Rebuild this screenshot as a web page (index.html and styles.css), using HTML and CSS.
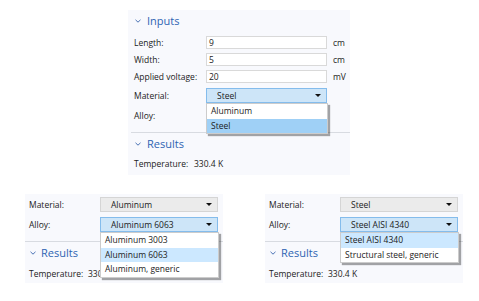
FILE: index.html
```html
<!DOCTYPE html>
<html lang="en">
<head>
    <meta charset="UTF-8">
    <title>Material selection</title>
    <link rel="stylesheet" href="styles.css">
</head>
<body>
    <div class="canvas">
        <!-- Full settings panel with the material list open -->
        <section class="panel panel-main">
            <div class="section-head">
                <svg class="chevron" viewBox="0 0 6 4"><path d="M0.5 0.8 L3 3.2 L5.5 0.8" /></svg>
                <span>Inputs</span>
            </div>
            <div class="form form-main">
                <label class="label">Length:</label>
                <div class="field">9</div>
                <span class="unit">cm</span>

                <label class="label">Width:</label>
                <div class="field">5</div>
                <span class="unit">cm</span>

                <label class="label">Applied voltage:</label>
                <div class="field">20</div>
                <span class="unit">mV</span>

                <label class="label tall">Material:</label>
                <div class="combo-wrap tall">
                    <div class="combo active">Steel<span class="arrow"></span></div>
                    <ul class="menu menu-dark">
                        <li>Aluminum</li>
                        <li class="selected">Steel</li>
                    </ul>
                </div>
                <span></span>

                <label class="label tall">Alloy:</label>
                <div class="tall"></div>
                <span></span>
            </div>
            <div class="divider"></div>
            <div class="section-head">
                <svg class="chevron" viewBox="0 0 6 4"><path d="M0.5 0.8 L3 3.2 L5.5 0.8" /></svg>
                <span>Results</span>
            </div>
            <div class="result">
                <span class="result-label">Temperature:</span>
                <span>330.4 K</span>
            </div>
        </section>

        <div class="bottom-row">
            <!-- Aluminum alloys -->
            <section class="panel panel-crop">
                <div class="form form-crop">
                    <label class="label tall">Material:</label>
                    <div class="combo-wrap tall">
                        <div class="combo">Aluminum<span class="arrow"></span></div>
                    </div>

                    <label class="label tall">Alloy:</label>
                    <div class="combo-wrap tall">
                        <div class="combo active">Aluminum 6063<span class="arrow"></span></div>
                        <ul class="menu">
                            <li>Aluminum 3003</li>
                            <li class="selected">Aluminum 6063</li>
                            <li>Aluminum, generic</li>
                        </ul>
                    </div>
                </div>
                <div class="divider divider-crop"></div>
                <div class="section-head head-crop">
                    <svg class="chevron" viewBox="0 0 6 4"><path d="M0.5 0.8 L3 3.2 L5.5 0.8" /></svg>
                    <span>Results</span>
                </div>
                <div class="result result-crop">
                    <span class="result-label">Temperature:</span>
                    <span>330.4 K</span>
                </div>
            </section>

            <!-- Steel alloys -->
            <section class="panel panel-crop">
                <div class="form form-crop">
                    <label class="label tall">Material:</label>
                    <div class="combo-wrap tall">
                        <div class="combo">Steel<span class="arrow"></span></div>
                    </div>

                    <label class="label tall">Alloy:</label>
                    <div class="combo-wrap tall">
                        <div class="combo active">Steel AISI 4340<span class="arrow"></span></div>
                        <ul class="menu">
                            <li class="selected">Steel AISI 4340</li>
                            <li>Structural steel, generic</li>
                        </ul>
                    </div>
                </div>
                <div class="divider divider-crop"></div>
                <div class="section-head head-crop">
                    <svg class="chevron" viewBox="0 0 6 4"><path d="M0.5 0.8 L3 3.2 L5.5 0.8" /></svg>
                    <span>Results</span>
                </div>
                <div class="result result-crop">
                    <span class="result-label">Temperature:</span>
                    <span>330.4 K</span>
                </div>
            </section>
        </div>
    </div>
</body>
</html>
```

FILE: styles.css
```css
body {
    margin: 0;
    padding: 0;
    background: #ffffff;
    font-family: 'Open Sans', 'Noto Sans', sans-serif;
    font-size: 8.5px;
    color: #1b1b1b;
    overflow: hidden;
}

.canvas {
    width: 479px;
    height: 301px;
    display: flex;
    flex-direction: column;
}

.panel {
    background: #f8f9fd;
    box-sizing: border-box;
}

.panel-main {
    width: 222px;
    height: 165px;
    margin: 10px 0 0 128px;
    padding: 4px 0 0 6px;
}

.section-head {
    display: flex;
    align-items: center;
    height: 13px;
    font-size: 11px;
    color: #2f64b3;
}

.chevron {
    width: 6px;
    height: 4px;
    margin: 1px 6px 0 1px;
}

.chevron path {
    fill: none;
    stroke: #4a72b4;
    stroke-width: 1;
}

.form {
    display: grid;
    grid-template-columns: 72px 121px auto;
    row-gap: 4px;
    align-items: center;
    margin-top: 9px;
}

.form-main {
    grid-template-rows: 13px 13px 13px 16px 16px;
}

.form-main .tall {
    align-self: end;
}

.form .tall {
    height: 15px;
}

.form .label.tall {
    line-height: 15px;
}

.label {
    white-space: nowrap;
}

.field {
    height: 13px;
    box-sizing: border-box;
    border: 1px solid #d9d9d9;
    background: #ffffff;
    padding-left: 2px;
    line-height: 11px;
}

.unit {
    padding-left: 6px;
}

.combo-wrap {
    position: relative;
}

.combo {
    height: 15px;
    box-sizing: border-box;
    border: 1px solid #d5d5d5;
    background: #ebebeb;
    padding-left: 10px;
    line-height: 13px;
    position: relative;
}

.combo.active {
    background: #cde5f8;
    border-color: #84bcec;
}

.arrow {
    position: absolute;
    right: 5px;
    top: 5px;
    width: 0;
    height: 0;
    border-left: 3px solid transparent;
    border-right: 3px solid transparent;
    border-top: 3px solid #111111;
}

/* Open dropdown lists */
.menu {
    position: absolute;
    top: 15px;
    left: 0;
    right: -1px;
    margin: 0;
    padding: 0;
    list-style: none;
    background: #ffffff;
    border: 1px solid #cccccc;
    box-shadow: 2px 2px 1px rgba(0, 0, 0, 0.35);
    z-index: 10;
}

.menu li {
    height: 14.5px;
    line-height: 14.5px;
    padding-left: 4px;
    white-space: nowrap;
}

.menu li.selected {
    background: #cce8ff;
}

.menu-dark li.selected {
    background: #9fd0f6;
}

.divider {
    height: 1px;
    background: #d8dbe1;
    margin: 9px 0 4px -3px;
}

.result {
    display: flex;
    margin-top: 7px;
    height: 13px;
    align-items: center;
}

.result-label {
    width: 60px;
}

.bottom-row {
    display: flex;
    gap: 42px;
    margin: 19px 0 0 25px;
}

.panel-crop {
    width: 198px;
    height: 89px;
    padding: 3px 0 0 4px;
}

.form-crop {
    grid-template-columns: 71px 118px;
    grid-auto-rows: 15px;
    row-gap: 5px;
    margin-top: 0;
}

.divider-crop {
    margin: 9px 0 4px -4px;
}

.head-crop .chevron {
    margin: 1px 5px 0 1px;
}

.result-crop {
    margin-top: 8px;
}

.result-crop .result-label {
    width: 59px;
}
```
